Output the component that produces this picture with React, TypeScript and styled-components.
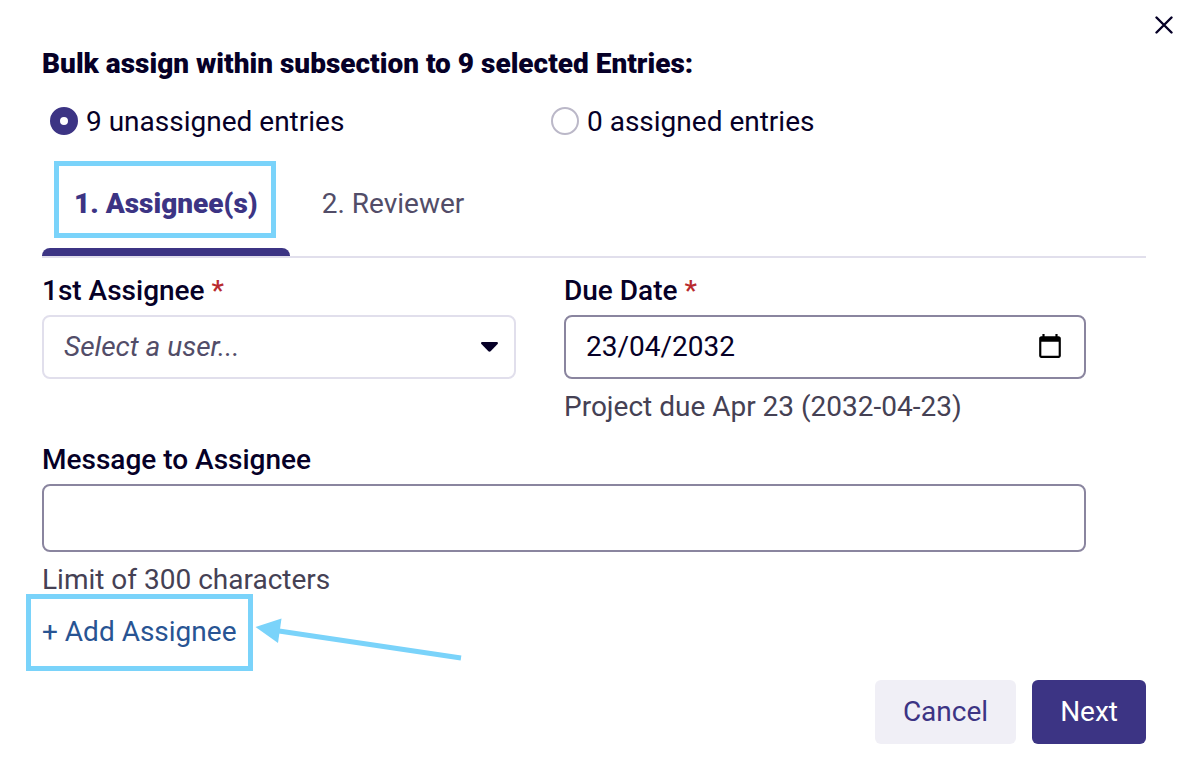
import React, { useState } from "react";
import styled, { createGlobalStyle } from "styled-components";

const color = {
  ink: "#060027",
  brand: "#3c3484",
  muted: "#524d68",
  helper: "#454154",
  link: "#285493",
  danger: "#b92b2f",
  callout: "#7ad3fa",
  line: "#e1dfec",
  field: "#8a859f",
  soft: "#f0eff6",
};

const GlobalStyle = createGlobalStyle`
  *, *::before, *::after { box-sizing: border-box; }
  body {
    margin: 0;
    background: #fff;
    color: ${color.ink};
    font: 400 28px/34px Roboto, "Liberation Sans", sans-serif;
  }
  button, input, select { font: inherit; color: inherit; }
`;

const Dialog = styled.main`
  display: flex;
  flex-direction: column;
  padding-bottom: 28px;
`;

const TopBar = styled.div`
  display: flex;
  justify-content: flex-end;
  padding: 4px 1px 1px;
`;

const CloseButton = styled.button`
  display: flex;
  align-items: center;
  justify-content: center;
  width: 42px;
  height: 42px;
  padding: 0;
  border: 0;
  background: none;
  cursor: pointer;
`;

const Content = styled.form`
  display: flex;
  flex-direction: column;
  padding: 0 40px 0 42px;
`;

const Title = styled.h1`
  margin: 0 0 24px;
  font-size: 28px;
  line-height: 34px;
  font-weight: 900;
`;

const RadioRow = styled.div`
  display: grid;
  grid-template-columns: 1fr 1fr;
  margin-bottom: 11px;
  padding: 0 94px 0 8px;
`;

const RadioLabel = styled.label`
  display: flex;
  align-items: flex-start;
  gap: 8px;
`;

const Radio = styled.input`
  appearance: none;
  width: 28px;
  height: 28px;
  margin: 2px 0 0;
  border: 2px solid #bbb8c8;
  border-radius: 50%;
  background: #fff;

  &:checked {
    border: 10px solid ${color.brand};
  }
`;

const TabList = styled.div`
  display: flex;
  border-bottom: 2px solid ${color.line};
`;

const Tab = styled.button<{ $active?: boolean }>`
  position: relative;
  height: 106px;
  padding: 2px 32px 0;
  border: 0;
  background: none;
  color: ${(p) => (p.$active ? color.brand : color.muted)};
  font-weight: ${(p) => (p.$active ? 900 : 400)};
  cursor: pointer;

  &::after {
    content: "";
    display: ${(p) => (p.$active ? "block" : "none")};
    position: absolute;
    inset: auto 0 0;
    height: 8px;
    border-radius: 8px 8px 0 0;
    background: ${color.brand};
  }
`;

const TabCallout = styled.span`
  position: absolute;
  inset: 11px 14px 18px 12px;
  border: 5px solid ${color.callout};
`;

const Fields = styled.div`
  display: grid;
  grid-template-columns: 1fr 1fr;
  padding: 16px 60px 0 0;
`;

const Field = styled.div<{ $wide?: boolean; $inset?: boolean }>`
  display: flex;
  flex-direction: column;
  grid-column: ${(p) => (p.$wide ? "1 / -1" : "auto")};
  padding-right: ${(p) => (p.$inset ? "48px" : "0")};
  margin-top: ${(p) => (p.$wide ? "19px" : "0")};
`;

const FieldLabel = styled.label`
  margin-bottom: 7px;
  font-weight: 500;
`;

const Required = styled.span`
  color: ${color.danger};
`;

const Control = styled.div`
  position: relative;
  display: flex;
`;

const Select = styled.select`
  appearance: none;
  width: 100%;
  height: 64px;
  padding: 0 60px 0 20px;
  border: 2px solid ${color.line};
  border-radius: 8px;
  background: #fff;
  color: ${color.muted};
  font-style: italic;
`;

const Caret = styled.svg`
  position: absolute;
  top: 27px;
  right: 18px;
  pointer-events: none;
`;

const TextInput = styled.input<{ $tall?: boolean }>`
  width: 100%;
  height: ${(p) => (p.$tall ? "68px" : "64px")};
  padding: 0 20px 2px;
  border: 2px solid ${color.field};
  border-radius: 8px;
  background: #fff;
`;

const PickerButton = styled.button`
  position: absolute;
  top: 18px;
  right: 23px;
  display: flex;
  padding: 0;
  border: 0;
  background: none;
  color: #000;
  cursor: pointer;
`;

const Helper = styled.p`
  margin: 11px 0 0;
  color: ${color.helper};
`;

const AddRow = styled.div`
  display: flex;
  margin: 18px 0 31px;
`;

const AddLink = styled.a`
  position: relative;
  color: ${color.link};
  text-decoration: none;

  &::after {
    content: "";
    position: absolute;
    inset: -21px -17px -22px -16px;
    border: 5px solid ${color.callout};
  }
`;

const Arrow = styled.svg`
  position: absolute;
  top: 0;
  left: 100%;
  margin-left: 17px;
  overflow: visible;
  pointer-events: none;
`;

const Actions = styled.div`
  display: flex;
  justify-content: flex-end;
  gap: 16px;
`;

const ActionButton = styled.button<{ $primary?: boolean }>`
  height: 64px;
  padding: 0 28px;
  border: 0;
  border-radius: 6px;
  background: ${(p) => (p.$primary ? color.brand : color.soft)};
  color: ${(p) => (p.$primary ? "#fff" : color.brand)};
  cursor: pointer;
`;

export default function App() {
  const [scope, setScope] = useState("unassigned");
  const [date, setDate] = useState("23/04/2032");
  const [message, setMessage] = useState("");

  return (
    <>
      <GlobalStyle />
      <Dialog>
        <TopBar>
          <CloseButton type="button" aria-label="Close">
            <svg width="18" height="18" viewBox="0 0 18 18" fill="none" stroke="currentColor" strokeWidth="2.4" strokeLinecap="round">
              <path d="M1.5 1.5 16.5 16.5M16.5 1.5 1.5 16.5" />
            </svg>
          </CloseButton>
        </TopBar>
        <Content onSubmit={(e) => e.preventDefault()}>
          <Title>Bulk assign within subsection to 9 selected Entries:</Title>
          <RadioRow>
            <RadioLabel>
              <Radio type="radio" name="scope" checked={scope === "unassigned"} onChange={() => setScope("unassigned")} />
              9 unassigned entries
            </RadioLabel>
            <RadioLabel>
              <Radio type="radio" name="scope" checked={scope === "assigned"} onChange={() => setScope("assigned")} />
              0 assigned entries
            </RadioLabel>
          </RadioRow>
          <TabList role="tablist">
            <Tab type="button" role="tab" aria-selected="true" $active>
              1. Assignee(s)
              <TabCallout />
            </Tab>
            <Tab type="button" role="tab" aria-selected="false">
              2. Reviewer
            </Tab>
          </TabList>
          <Fields>
            <Field $inset>
              <FieldLabel htmlFor="assignee">
                1st Assignee <Required>*</Required>
              </FieldLabel>
              <Control>
                <Select id="assignee" defaultValue="">
                  <option value="">Select a user...</option>
                </Select>
                <Caret width="17" height="10" viewBox="0 0 17 10" fill={color.ink} aria-hidden="true">
                  <path d="M1.3 0h14.4c1.1 0 1.6 1.2.9 2L9.6 9.3c-.6.6-1.6.6-2.2 0L.4 2C-.3 1.2.2 0 1.3 0z" />
                </Caret>
              </Control>
            </Field>
            <Field>
              <FieldLabel htmlFor="due">
                Due Date <Required>*</Required>
              </FieldLabel>
              <Control>
                <TextInput id="due" type="text" inputMode="numeric" value={date} onChange={(e) => setDate(e.target.value)} />
                <PickerButton type="button" aria-label="Open calendar">
                  <svg width="26" height="26" viewBox="0 0 24 24" fill="currentColor">
                    <path d="M20 3h-1V1h-2v2H7V1H5v2H4c-1.1 0-2 .9-2 2v16c0 1.1.9 2 2 2h16c1.1 0 2-.9 2-2V5c0-1.1-.9-2-2-2zm0 18H4V8h16v13z" />
                  </svg>
                </PickerButton>
              </Control>
              <Helper>Project due Apr 23 (2032-04-23)</Helper>
            </Field>
            <Field $wide>
              <FieldLabel htmlFor="message">Message to Assignee</FieldLabel>
              <TextInput id="message" type="text" maxLength={300} $tall value={message} onChange={(e) => setMessage(e.target.value)} />
              <Helper>Limit of 300 characters</Helper>
            </Field>
          </Fields>
          <AddRow>
            <AddLink href="#add-assignee">
              + Add Assignee
              <Arrow width="210" height="50" viewBox="0 0 210 50" aria-hidden="true">
                <path d="M26 16 208 43" stroke={color.callout} strokeWidth="5" fill="none" />
                <path d="M2.5 12 28.5 3.5 25 28z" fill={color.callout} />
              </Arrow>
            </AddLink>
          </AddRow>
          <Actions>
            <ActionButton type="button">Cancel</ActionButton>
            <ActionButton type="submit" $primary>
              Next
            </ActionButton>
          </Actions>
        </Content>
      </Dialog>
    </>
  );
}
